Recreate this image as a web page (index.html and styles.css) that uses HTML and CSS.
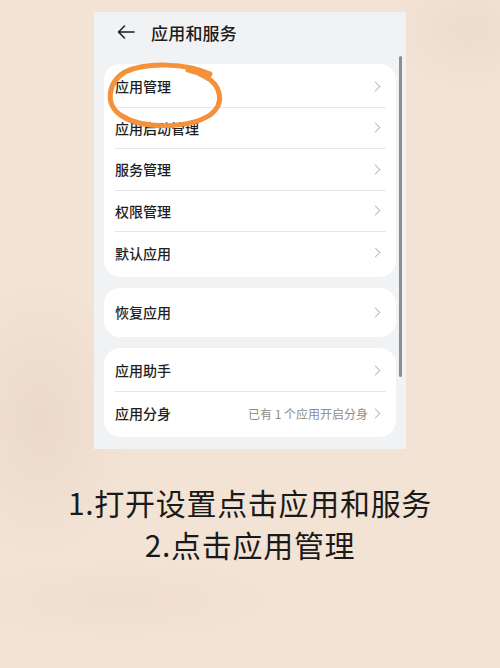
FILE: index.html
```html
<!DOCTYPE html>
<html lang="zh">
<head>
<meta charset="utf-8">
<link rel="stylesheet" href="styles.css">
</head>
<body>
<div class="page">
  <div class="phone">
    <div class="header">
      <svg class="back" width="18" height="14" viewBox="0 0 18 14"><path d="M17 7H1.5M7.5 1L1.5 7l6 6" fill="none" stroke="#1a1a1a" stroke-width="1.5" stroke-linecap="round" stroke-linejoin="round"/></svg>
      <span class="title">应用和服务</span>
    </div>
    <div class="card c1">
      <div class="row"><span class="label">应用管理</span><span class="chev"></span></div>
      <div class="row"><span class="label">应用启动管理</span><span class="chev"></span></div>
      <div class="row"><span class="label">服务管理</span><span class="chev"></span></div>
      <div class="row"><span class="label">权限管理</span><span class="chev"></span></div>
      <div class="row last"><span class="label">默认应用</span><span class="chev"></span></div>
    </div>
    <div class="card c2">
      <div class="row last single"><span class="label">恢复应用</span><span class="chev"></span></div>
    </div>
    <div class="card c3">
      <div class="row"><span class="label">应用助手</span><span class="chev"></span></div>
      <div class="row last"><span class="label">应用分身</span><span class="value">已有 1 个应用开启分身</span><span class="chev"></span></div>
    </div>
    <div class="scrollbar"></div>
    <svg class="circle" width="130" height="80" viewBox="0 0 130 80"><path d="M110 19 C 86 8, 46 7, 25 17 C 8 27, 4 50, 22 61 C 44 75, 90 73, 110 60 C 125 49, 122 30, 104 21 C 99 18, 93 16, 88 15" fill="none" stroke="#f4913a" stroke-width="5" stroke-linecap="round"/><path d="M93 14 L 108 22" stroke="#f4913a" stroke-width="6" stroke-linecap="round"/></svg>
  </div>
  <div class="caption">
    <div>1.打开设置点击应用和服务</div>
    <div>2.点击应用管理</div>
  </div>
</div>
</body>
</html>
```
FILE: styles.css
```css
html, body {
  margin: 0;
  padding: 0;
}
body {
  width: 500px;
  height: 668px;
  overflow: hidden;
  background-color: #f3e3d4;
  background-image:
    radial-gradient(ellipse 90px 140px at 40px 420px, rgba(200,180,165,0.2), rgba(200,180,165,0) 100%),
    radial-gradient(ellipse 160px 40px at 120px 600px, rgba(200,180,165,0.1), rgba(200,180,165,0) 100%),
    radial-gradient(ellipse 80px 60px at 470px 30px, rgba(200,180,165,0.15), rgba(200,180,165,0) 100%);
  font-family: "Noto Sans CJK SC", "Noto Sans", sans-serif;
}
.page {
  display: flex;
  flex-direction: column;
  align-items: center;
  padding-top: 12px;
}
.phone {
  position: relative;
  width: 312px;
  height: 437px;
  background: #f1f2f4;
  box-sizing: border-box;
  padding: 0 10px;
  display: flex;
  flex-direction: column;
}
.header {
  height: 52px;
  display: flex;
  align-items: center;
  padding-left: 13px;
  box-sizing: border-box;
  padding-bottom: 12px;
}
.back {
  display: block;
}
.title {
  margin-left: 16px;
  font-size: 17px;
  font-weight: 500;
  color: #1c1c1c;
  letter-spacing: 0.2px;
}
.card {
  background: #ffffff;
  border-radius: 16px;
  padding: 2px 0 1px 11px;
}
.c2, .c3 {
  margin-top: 11px;
}
.row {
  display: flex;
  align-items: center;
  border-bottom: 1px solid #e6e6e8;
  margin-right: 10px;
  box-sizing: border-box;
}
.row.last {
  border-bottom: none;
}
.c1 .row {
  height: 41.5px;
}
.c1 {
  padding-bottom: 3px;
}
.c2 {
  padding-top: 0;
  padding-bottom: 0;
}
.row.single {
  height: 49px;
}
.c3 .row {
  height: 42.5px;
}
.c3 {
  padding-top: 2px;
  padding-bottom: 2px;
}
.label {
  flex: 1;
  font-size: 14px;
  color: #1e1e1e;
  font-weight: 500;
}
.value {
  font-size: 12px;
  color: #8c8c8c;
  margin-right: 4px;
}
.chev {
  width: 6px;
  height: 6px;
  border-right: 1.3px solid #bdbdbd;
  border-top: 1.3px solid #bdbdbd;
  transform: rotate(45deg);
  margin-right: 7px;
}
.scrollbar {
  position: absolute;
  left: 305px;
  top: 44px;
  width: 3px;
  height: 321px;
  background: #8d8d8d;
  border-radius: 2px;
}
.circle {
  position: absolute;
  left: 6px;
  top: 43px;
}
.caption {
  margin-top: 32px;
  text-align: center;
  font-size: 30px;
  line-height: 42px;
  color: #1a1a1a;
  letter-spacing: 0.7px;
}
```
